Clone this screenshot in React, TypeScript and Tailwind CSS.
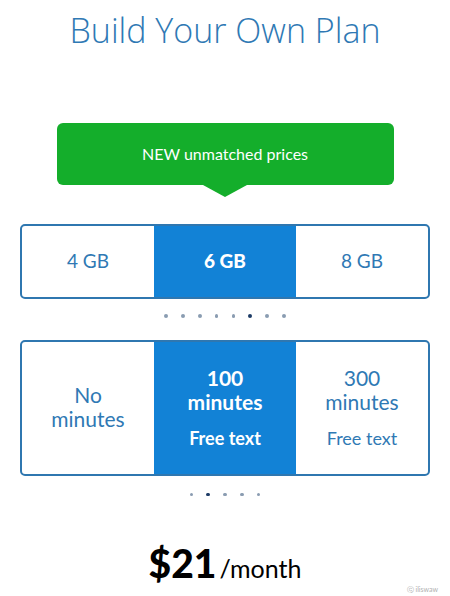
import React from "react";

const gbOptions = ["4 GB", "6 GB", "8 GB"];

const Dots = ({ count, active }: { count: number; active: number }) => (
  <div className="flex items-center gap-[13.3px]">
    {Array.from({ length: count }).map((_, i) => (
      <span
        key={i}
        className={
          i === active
            ? "block w-[3.5px] h-[3.5px] rounded-full bg-[#1d3b66]"
            : "block w-[3.5px] h-[3.5px] rounded-full bg-[#8a9cb1]"
        }
      />
    ))}
  </div>
);

export default function App() {
  return (
    <div
      className="relative w-[450px] h-[596px] bg-white overflow-hidden flex flex-col items-center"
      style={{ fontFamily: "Lato, 'Open Sans', sans-serif" }}
    >
      <h1
        className="mt-[9px] text-[34px] leading-[42px] font-light text-[#2f79b4]"
        style={{ fontFamily: "'Open Sans', sans-serif" }}
      >
        Build Your Own Plan
      </h1>

      {/* promo banner with pointer */}
      <div className="relative mt-[72px] w-[337px] h-[62px] rounded-[6px] bg-[#14ae2b] flex items-center justify-center">
        <span className="text-white text-[16px] leading-none">NEW unmatched prices</span>
        <span className="absolute left-1/2 -translate-x-1/2 top-full w-0 h-0 border-l-[22px] border-r-[22px] border-t-[12px] border-l-transparent border-r-transparent border-t-[#14ae2b]" />
      </div>

      {/* data selector */}
      <div className="mt-[39px] w-[410px] h-[75px] border-2 border-[#2f77b0] rounded-[5px] overflow-hidden grid grid-cols-[132px_142px_1fr]">
        {gbOptions.map((gb, i) =>
          i === 1 ? (
            <div key={gb} className="bg-[#1282d6] flex items-center justify-center text-white font-black text-[19px]">
              {gb}
            </div>
          ) : (
            <div key={gb} className="flex items-center justify-center text-[#2f79b4] text-[19px]">
              {gb}
            </div>
          )
        )}
      </div>

      <div className="mt-[15px]">
        <Dots count={8} active={5} />
      </div>

      {/* minutes selector */}
      <div className="mt-[22px] w-[410px] h-[136px] border-2 border-[#2f77b0] rounded-[5px] overflow-hidden grid grid-cols-[132px_142px_1fr]">
        <div className="flex flex-col items-center justify-center text-[#2f79b4] text-[21px] leading-[24px] pb-[2px]">
          <span>No</span>
          <span>minutes</span>
        </div>
        <div className="bg-[#1282d6] flex flex-col items-center justify-center text-white font-bold text-[21px] leading-[24px]">
          <span>100</span>
          <span>minutes</span>
          <span className="mt-[12px] text-[18px]">Free text</span>
        </div>
        <div className="flex flex-col items-center justify-center text-[#2f79b4] text-[21px] leading-[24px]">
          <span>300</span>
          <span>minutes</span>
          <span className="mt-[12px] text-[18px]">Free text</span>
        </div>
      </div>

      <div className="mt-[17px]">
        <Dots count={5} active={1} />
      </div>

      {/* price */}
      <div className="mt-[48px] flex items-baseline text-black leading-none">
        <span className="text-[39px] font-black">$21</span>
        <span className="ml-[3px] text-[25px]">/month</span>
      </div>

      <span className="absolute right-[12px] bottom-[3px] text-[7px] text-[#b0b0b0] leading-none">
        ⓒ iliswaw
      </span>
    </div>
  );
}
